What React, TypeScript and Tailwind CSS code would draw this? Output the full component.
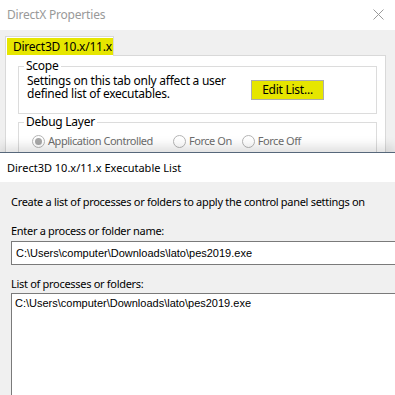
import React from "react";

const Radio = ({ checked, label, className }: { checked?: boolean; label: string; className?: string }) => (
  <div className={`flex items-center gap-[3px] ${className ?? ""}`}>
    <span className="flex h-[13px] w-[13px] shrink-0 items-center justify-center rounded-full border border-[#b5b5b5] bg-white">
      {checked && <span className="h-[7px] w-[7px] rounded-full bg-[#a8a8a8]" />}
    </span>
    <span className="whitespace-nowrap text-[11px] tracking-[-0.45px] text-[#6d6d6d]">{label}</span>
  </div>
);

const GroupBox = ({ title, className, children }: { title: string; className?: string; children?: React.ReactNode }) => (
  <div className={`relative border border-[#dcdcdc] ${className ?? ""}`}>
    {/* label sits on top of the border line */}
    <span className="absolute left-[5px] top-[-8px] bg-white px-[2px] leading-[14px] text-black">{title}</span>
    {children}
  </div>
);

const PropertiesWindow = () => (
  <div className="h-[152px] shrink-0 overflow-hidden bg-[#f0f0f0]">
    {/* title bar */}
    <div className="flex h-[30px] items-center justify-between bg-white pl-[7px] pr-[11px]">
      <span className="text-[12px] tracking-[-0.2px] text-[#999999]">DirectX Properties</span>
      <svg width="11" height="11" viewBox="0 0 11 11" className="mt-[-2px]">
        <path d="M0.5 0.5 L10.5 10.5 M10.5 0.5 L0.5 10.5" stroke="#9a9a9a" strokeWidth="1" />
      </svg>
    </div>
    <div className="pl-[5px] pr-[9px] pt-[6px]">
      {/* tab strip */}
      <div className="flex">
        <div className="relative z-10 mb-[-1px] h-[20px] w-[109px] border border-b-0 border-[#d9d9d9] bg-white pl-[1px] pt-[1px]">
          <div className="flex h-[17px] items-center whitespace-nowrap bg-[#e6e600] pl-[6px] text-black">Direct3D 10.x/11.x</div>
        </div>
      </div>
      {/* tab page */}
      <div className="h-[120px] border border-[#d9d9d9] bg-white pl-[12px] pr-[8px] pt-[10px]">
        <GroupBox title="Scope" className="flex h-[48px] items-start justify-between pl-[8px] pr-[52px] pt-[7px]">
          <div className="leading-[13px] text-black">
            Settings on this tab only affect a user
            <br />
            defined list of executables.
          </div>
          <button className="mt-[6px] h-[20px] w-[73px] border border-[#adadad] bg-[#e6e600] leading-[16px] text-black">Edit List...</button>
        </GroupBox>
        <GroupBox title="Debug Layer" className="mt-[8px] flex h-[60px] items-start pl-[13px] pt-[10px]">
          <Radio checked label="Application Controlled" />
          <Radio label="Force On" className="ml-[20px]" />
          <Radio label="Force Off" className="ml-[10px]" />
        </GroupBox>
      </div>
    </div>
  </div>
);

const ExecutableListWindow = () => (
  <div className="relative z-10 min-h-0 flex-1 overflow-hidden border-t border-[#56677a] bg-[#f0f0f0] text-[11px] tracking-[-0.3px] shadow-[0_-6px_10px_rgba(0,0,0,0.12)]">
    <div className="flex h-[29px] items-center bg-white pl-[7px] tracking-[0px] text-black">Direct3D 10.x/11.x Executable List</div>
    <div className="pl-[11px] pt-[12px]">
      <div className="leading-[15px] text-black">Create a list of processes or folders to apply the control panel settings on</div>
      <div className="mt-[14px] leading-[15px] text-black">Enter a process or folder name:</div>
      <div className="mt-[3px] flex h-[24px] w-[400px] items-center border border-[#7a7a7a] bg-white pl-[4px] text-[11px] tracking-[0px] text-black [font-family:'Liberation_Sans',sans-serif]">
        C:\Users\computer\Downloads\lato\pes2019.exe
      </div>
      <div className="mt-[11px] leading-[15px] text-black">List of processes or folders:</div>
      <div className="mt-[2px] h-[120px] w-[400px] border border-[#7a7a7a] bg-white pl-[3px] pt-[2px] text-[11px] leading-[14px] tracking-[0px] text-black [font-family:'Liberation_Sans',sans-serif]">
        C:\Users\computer\Downloads\lato\pes2019.exe
      </div>
    </div>
  </div>
);

export default function App() {
  return (
    <div className="flex h-[395px] w-[395px] flex-col overflow-hidden bg-[#f0f0f0] text-[12px] leading-[16px] tracking-[-0.25px] [font-family:'Noto_Sans',sans-serif]">
      <PropertiesWindow />
      <ExecutableListWindow />
    </div>
  );
}
